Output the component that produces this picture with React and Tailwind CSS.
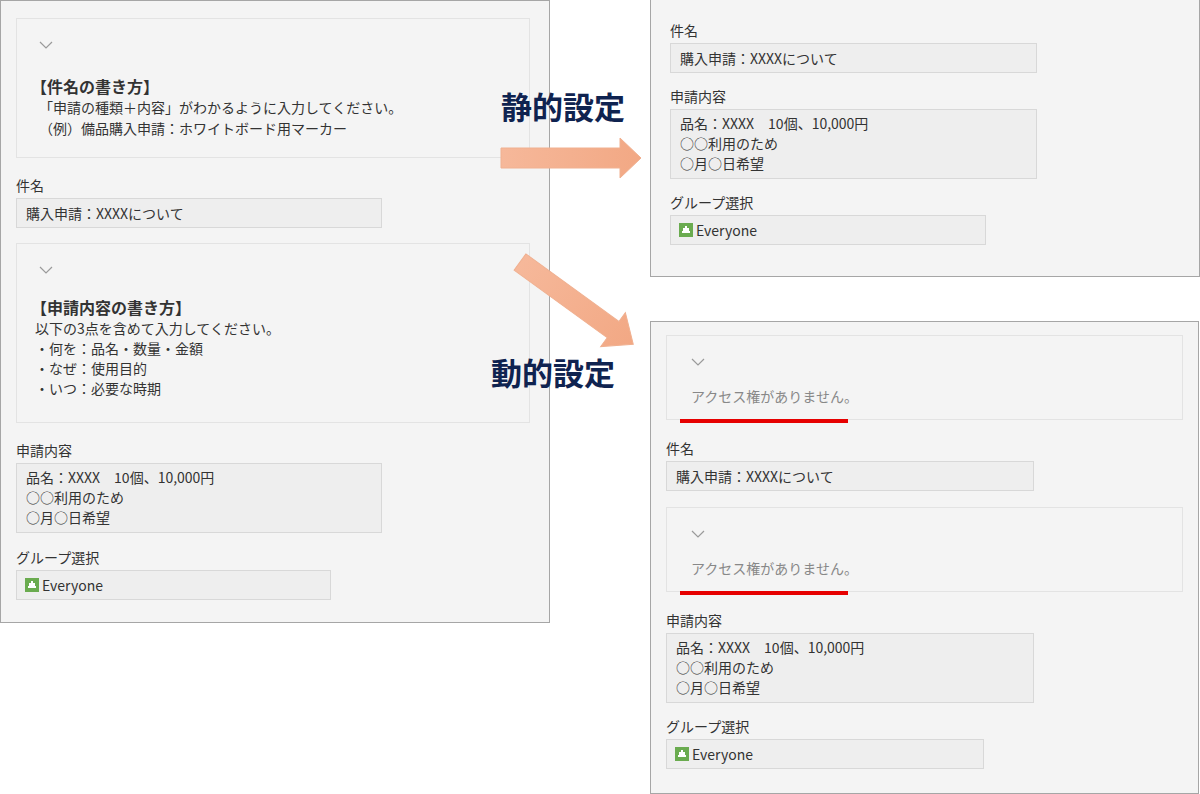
const F = { fontFamily: '"Noto Sans CJK JP", "Noto Sans", sans-serif' };

function Chevron() {
  return (
    <svg width="14" height="8" viewBox="0 0 14 8" className="block">
      <path d="M1 1 L7 7 L13 1" fill="none" stroke="#9a9a9a" strokeWidth="1.2" />
    </svg>
  );
}

function Label({ children, mt }) {
  return <div className={`text-[14px] text-[#333] leading-[20px] ${mt}`}>{children}</div>;
}

function Input({ w, children }) {
  return (
    <div className={`${w} h-[30px] mt-[3px] border border-[#d8d8d8] bg-[#eeeeee] px-[9px] flex items-center text-[14px] text-[#333]`}>
      {children}
    </div>
  );
}

function TextArea({ w }) {
  return (
    <div className={`${w} h-[70px] mt-[3px] border border-[#d8d8d8] bg-[#eeeeee] px-[9px] py-[3px] text-[14px] leading-[20px] text-[#333]`}>
      <div>品名：XXXX　10個、10,000円</div>
      <div>○○利用のため</div>
      <div>○月○日希望</div>
    </div>
  );
}

function Group({ w }) {
  return (
    <div className={`${w} h-[30px] mt-[3px] border border-[#d8d8d8] bg-[#eeeeee] px-[8px] flex items-center gap-[3px] text-[14px] text-[#333]`}>
      <svg width="14" height="14" viewBox="0 0 14 14">
        <rect width="14" height="14" fill="#6aab4f" />
        <rect x="3" y="8" width="8" height="2" fill="#fff" />
        <rect x="4" y="5" width="2" height="3" fill="#fff" />
        <rect x="8" y="5" width="2" height="3" fill="#fff" />
        <rect x="6" y="3" width="2" height="5" fill="#fff" />
      </svg>
      Everyone
    </div>
  );
}

function NoAccess() {
  return (
    <div className="relative">
      <div className="h-[85px] border border-[#e3e3e3] pl-[24px] pt-[22px]">
        <Chevron />
        <div className="mt-[20px] text-[14px] text-[#888]">アクセス権がありません。</div>
      </div>
      <div className="absolute left-[14px] top-[84px] w-[168px] h-[4px] bg-[#e60000]" />
    </div>
  );
}

export default function App() {
  return (
    <div className="relative w-[1200px] h-[794px] bg-white overflow-hidden" style={F}>
      {/* Left panel */}
      <div className="absolute left-0 top-0 w-[550px] h-[623px] border border-[#a6a6a6] bg-[#f4f4f4] px-[15px] pt-[17px]">
        <div className="w-[514px] h-[140px] border border-[#e3e3e3] pl-[22px] pt-[22px]">
          <Chevron />
          <div className="mt-[26px] -ml-[8px] text-[16px] font-bold text-[#333] leading-[22px]">【件名の書き方】</div>
          <div className="text-[14px] leading-[21px] text-[#333]">「申請の種類＋内容」がわかるように入力してください。</div>
          <div className="text-[14px] leading-[21px] text-[#333]">（例）備品購入申請：ホワイトボード用マーカー</div>
        </div>
        <Label mt="mt-[17px]">件名</Label>
        <Input w="w-[366px]">購入申請：XXXXについて</Input>
        <div className="mt-[15px] w-[514px] h-[180px] border border-[#e3e3e3] pl-[22px] pt-[22px]">
          <Chevron />
          <div className="mt-[22px] -ml-[8px] text-[16px] font-bold text-[#333] leading-[22px]">【申請内容の書き方】</div>
          <div className="text-[14px] leading-[20px] text-[#333] -ml-[4px]">
            <div>以下の3点を含めて入力してください。</div>
            <div>・何を：品名・数量・金額</div>
            <div>・なぜ：使用目的</div>
            <div>・いつ：必要な時期</div>
          </div>
        </div>
        <Label mt="mt-[17px]">申請内容</Label>
        <TextArea w="w-[366px]" />
        <Label mt="mt-[14px]">グループ選択</Label>
        <Group w="w-[315px]" />
      </div>

      {/* Top right panel */}
      <div className="absolute left-[650px] top-[-1px] w-[550px] h-[278px] border border-[#a6a6a6] bg-[#f4f4f4] px-[19px] pt-[20px]">
        <Label>件名</Label>
        <Input w="w-[367px]">購入申請：XXXXについて</Input>
        <Label mt="mt-[13px]">申請内容</Label>
        <TextArea w="w-[367px]" />
        <Label mt="mt-[13px]">グループ選択</Label>
        <Group w="w-[316px]" />
      </div>

      {/* Bottom right panel */}
      <div className="absolute left-[650px] top-[321px] w-[549px] h-[473px] border border-[#a6a6a6] bg-[#f4f4f4] px-[15px] pt-[13px]">
        <NoAccess />
        <Label mt="mt-[18px]">件名</Label>
        <Input w="w-[368px]">購入申請：XXXXについて</Input>
        <div className="mt-[16px]"><NoAccess /></div>
        <Label mt="mt-[18px]">申請内容</Label>
        <TextArea w="w-[368px]" />
        <Label mt="mt-[13px]">グループ選択</Label>
        <Group w="w-[318px]" />
      </div>

      {/* Labels */}
      <div className="absolute left-[501px] top-[84px] text-[31px] font-bold text-[#0f2350] leading-[44px]">静的設定</div>
      <div className="absolute left-[491px] top-[350px] text-[31px] font-bold text-[#0f2350] leading-[44px]">動的設定</div>

      {/* Arrows */}
      <svg className="absolute left-0 top-0" width="1200" height="794">
        <defs>
          <linearGradient id="g" x1="0" x2="1">
            <stop offset="0" stopColor="#f6b89a" />
            <stop offset="1" stopColor="#f2a884" />
          </linearGradient>
        </defs>
        <polygon points="501,148 620,148 620,138 641,158 620,178 620,168 501,168" fill="url(#g)" stroke="#f0b090" strokeWidth="1" />
        <g transform="translate(520,262) rotate(36)">
          <polygon points="0,-10 115,-10 115,-21 140,0 115,21 115,10 0,10" fill="url(#g)" stroke="#f0b090" strokeWidth="1" />
        </g>
      </svg>
    </div>
  );
}
